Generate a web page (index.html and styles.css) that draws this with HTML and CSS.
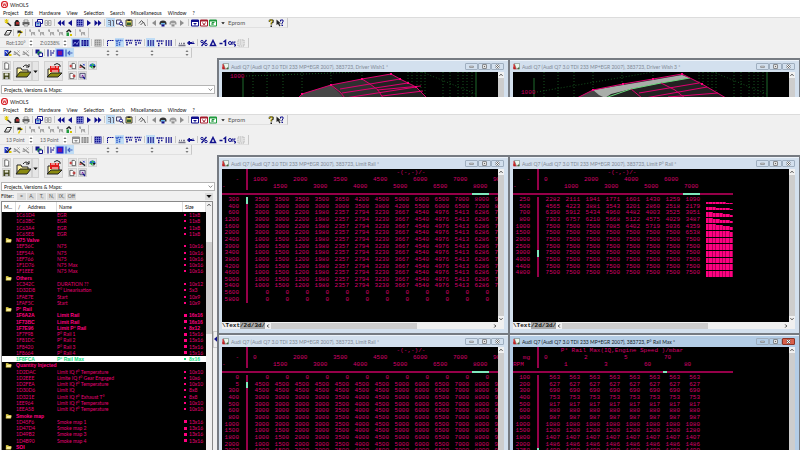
FILE: index.html
```
<!DOCTYPE html>
<html lang="en">
<head>
<meta charset="UTF-8">
<title>WinOLS</title>
<link rel="stylesheet" href="styles.css">
</head>
<body>
<div class="app app-back" id="back"></div>
<div class="app app-front" id="front"></div>
<script src="app.js"></script>
</body>
</html>
```
FILE: styles.css
```
/* Variables */

:root {
    --face: #f0f0f0;
    --line: #c8c8c8;
    --hot: #bfdcf5;
    --pink: #ff0080;
    --pink-dim: #960049;
    --mint: #7fe8bd;
    --ui: Lato, Roboto, sans-serif;
    --list: Lato, "Liberation Sans", sans-serif;
    --list-bold: "Liberation Sans", Arial, sans-serif;
    --mono: "Liberation Mono", "Courier New", monospace;
}

* {
    box-sizing: border-box;
    margin: 0;
    padding: 0;
}

body {
    display: flex;
    flex-direction: column;
    height: 100vh;
    overflow: hidden;
    background: var(--face);
    color: #111;
    font-family: var(--ui);
    font-size: 5px;
    line-height: 6px;
}

button, input, select {
    border: 0;
    background: none;
    color: inherit;
    font: inherit;
    appearance: none;
}

svg {
    display: block;
}

/* Application shell */

.app {
    display: flex;
    flex-direction: column;
    overflow: hidden;
    background: var(--face);
}

.app-back {
    flex: 0 0 97px;
}

.app-front {
    flex: 1;
    min-height: 0;
}

.app > * {
    flex: none;
}

.caption {
    display: flex;
    align-items: center;
    gap: 2px;
    height: 9px;
    padding-left: 1px;
    background: #fff;
}

.caption svg {
    width: 7px;
    height: 7px;
}

.menu {
    display: flex;
    gap: 6px;
    align-items: center;
    height: 9px;
    padding-left: 3px;
    background: #fff;
    border-bottom: 1px solid #dcdcdc;
}

.menu a {
    color: #111;
    text-decoration: none;
}

/* Toolbars */

.bar {
    display: flex;
    align-items: center;
    align-self: flex-start;
    gap: 3px;
    height: 10px;
    padding: 0 2px 0 3px;
    border-right: 1px solid var(--line);
    border-bottom: 1px solid #e0e0e0;
}

.group {
    display: flex;
    height: 9px;
    position: relative;
}

.group + .group::before {
    content: '';
    position: absolute;
    left: -2px;
    top: 1px;
    width: 1px;
    height: 7px;
    background: var(--line);
}

.g1 { width: 9px; }
.g2 { width: 19px; }
.g3 { width: 28px; }
.g4 { width: 38px; }
.g5 { width: 47px; }

.tool {
    display: flex;
    flex: 1;
    align-items: center;
    justify-content: center;
}

.tool svg {
    width: 8px;
    height: 8px;
}

.tool.on {
    background: var(--hot);
}

.tool.off {
    filter: grayscale(1);
    opacity: 0.45;
}

.device {
    display: flex;
    align-items: center;
    gap: 3px;
    width: 42px;
    color: #555;
    font-size: 6px;
}

.spin {
    display: flex;
    align-items: center;
    width: 31px;
}

.spin input {
    width: 26px;
    height: 8px;
    padding-left: 3px;
    color: #666;
    font-size: 5px;
}

.updown {
    width: 4px;
    height: 8px;
    background: #fff;
}

.updown svg {
    width: 4px;
    height: 8px;
}

.fields {
    display: flex;
    justify-content: space-between;
    width: 112px;
    padding-left: 29px;
}

.fields .updown {
    background: none;
}

.fields .updown + .updown {
    margin-left: 3px;
}

.fields .wide {
    margin-left: 26px;
}

/* Workspace */

.work {
    display: flex;
    overflow: hidden;
}

.app > .work {
    flex: 1;
    min-height: 0;
}

.side {
    display: flex;
    flex: none;
    flex-direction: column;
    width: 213px;
    padding-left: 1px;
}

.actions {
    display: flex;
    gap: 2px;
    height: 23px;
    padding: 3px 0 0 1px;
    flex: none;
}

.actions button {
    display: flex;
    align-items: center;
    justify-content: center;
    background: #e6e6e6;
    border: 1px solid #d2d2d2;
}

.stack {
    display: grid;
    grid-template-columns: repeat(var(--n), 9px);
    grid-auto-rows: 9px;
    gap: 1px;
}

.stack svg {
    width: 8px;
    height: 8px;
}

.open {
    display: flex;
    margin-right: 3px;
}

.actions .big {
    width: 19px;
}

.actions .drop {
    width: 7px;
}

.big svg {
    width: 16px;
    height: 16px;
}

.drop svg {
    width: 5px;
    height: 5px;
}

.actions .solo {
    margin-right: 3px;
}

.view {
    position: relative;
    flex: none;
    width: 214px;
    height: 9px;
    margin-top: 4px;
}

.view select {
    width: 100%;
    height: 9px;
    padding-left: 2px;
    background: #fff;
    border: 1px solid #b4b4b4;
    font-family: var(--list);
}

.view svg {
    position: absolute;
    right: 2px;
    top: 2px;
    width: 5px;
    height: 5px;
}

.filter {
    display: flex;
    flex: none;
    align-items: center;
    gap: 1px;
    height: 10px;
    font-family: var(--list);
}

.filter span {
    width: 15px;
}

.filter button {
    width: 9px;
    height: 7px;
    background: #dcdcdc;
    color: #555;
    line-height: 7px;
}

.filter button:last-of-type {
    width: 8px;
    margin-left: auto;
}

.filter svg {
    width: 6px;
    height: 6px;
    margin: 0 auto;
}

/* Map list */

.list {
    display: flex;
    flex: 1;
    min-height: 0;
    border: 1px solid #888;
    border-bottom: 0;
    background: #fff;
}

.maps {
    display: flex;
    flex: 1;
    flex-direction: column;
    font-family: var(--list);
    white-space: nowrap;
}

.maps tr {
    display: grid;
    grid-template-columns: 14px 41px 126px 1fr;
    align-items: center;
}

.maps th {
    height: 10px;
    padding-left: 2px;
    font-weight: normal;
    line-height: 10px;
    text-align: left;
    border-right: 1px solid #ddd;
}

.maps tbody {
    display: grid;
    flex: 1;
    grid-template-rows: repeat(38, 1fr);
    background: #000;
    color: #e80076;
}

.maps td {
    display: flex;
    align-items: center;
    height: 6px;
    line-height: 6px;
}

.maps .folder, .maps .strong {
    color: var(--pink);
    font-family: var(--list-bold);
    font-weight: bold;
}

.maps .picked {
    background: #fff;
    color: #12e283;
    font-family: var(--list-bold);
    font-weight: bold;
}

.maps svg {
    width: 7px;
    height: 6px;
    margin-left: 3px;
}

.dot {
    width: 2px;
    height: 2px;
    margin: 0 3px 0 1px;
    background: var(--pink);
}

.dot.fat {
    width: 3px;
    height: 3px;
    margin: 0 2px 0 1px;
}

.picked .dot {
    background: #12e283;
}

.vscroll {
    display: flex;
    flex: none;
    flex-direction: column;
    align-items: center;
    width: 6px;
    background: var(--face);
}

.vscroll svg {
    flex: none;
    width: 6px;
    height: 6px;
}

.vscroll i {
    width: 6px;
    flex: 1;
    background: #cdcdcd;
}

.list .vscroll i {
    flex: 0 0 92px;
    margin-top: 34px;
}

.splitter {
    display: flex;
    flex: none;
    align-items: center;
    width: 4px;
}

.splitter button {
    width: 4px;
    height: 17px;
    margin-top: 73px;
    border: 1px solid #ccc;
    border-right: 0;
}

.splitter svg {
    width: 3px;
    height: 6px;
}

/* Child windows */

.desk {
    display: grid;
    flex: 1;
    grid-template-columns: 1fr 1fr;
    grid-auto-rows: 176px;
    gap: 2px;
    min-width: 0;
    padding: 2px 1px 0 2px;
    background: #767b82;
    overflow: hidden;
}

.win {
    display: flex;
    flex-direction: column;
    min-width: 0;
    padding: 0 4px 4px 3px;
    background: #d3e0ee;
    border-top: 1px solid #edf3fa;
}

.win.active {
    background: #b4cde6;
}

.head {
    display: flex;
    flex: none;
    align-items: center;
    gap: 2px;
    height: 11px;
    color: #7f8995;
}

.active .head {
    color: #111a24;
}

.head svg {
    width: 7px;
    height: 7px;
}

.head h2 {
    flex: 1;
    overflow: hidden;
    font-size: 5px;
    font-weight: normal;
    white-space: nowrap;
}

.buttons {
    display: flex;
}

.buttons button {
    width: 13px;
    height: 7px;
    border: 1px solid #9fafc0;
    border-radius: 1px;
}

.buttons svg {
    width: 5px;
    height: 5px;
    margin: 0 auto;
}

.active .close {
    background: #d9604a;
    border-color: #8b3326;
}

.pane {
    display: flex;
    flex: 1;
    min-height: 0;
}

.canvas {
    flex: 1;
    min-width: 0;
    overflow: hidden;
    background: #000;
}

.canvas > svg {
    width: 100%;
    height: 153px;
}

.canvas text {
    fill: #c80066;
    font-family: var(--mono);
    font-size: 6px;
}

.tabs {
    display: flex;
    flex: none;
    align-items: center;
    height: 7px;
    padding-right: 6px;
    background: var(--face);
}

.tabs button {
    height: 7px;
    font: bold 6px/7px var(--mono);
}

.tabs button + button {
    background: #aaa;
}

.tabs svg {
    width: 6px;
    height: 6px;
}

.track {
    flex: 1;
}

.track i {
    display: block;
    width: 66%;
    height: 6px;
    background: #cdcdcd;
}

/* Value grids */

.grid {
    display: block;
    height: 100%;
    color: #d6006b;
    font-family: var(--mono);
    font-size: 6px;
    white-space: pre;
}

.grid tbody {
    display: grid;
    grid-template-rows: 8px repeat(22, 1fr);
    height: calc(100% + 1px);
}

.grid tr {
    display: grid;
    grid-template-columns: 17px 10px repeat(var(--cols), 20px) 33px;
    align-items: center;
}

.grid th, .grid td {
    font-weight: normal;
    line-height: 6px;
    text-align: right;
}

.grid .stem {
    align-self: stretch;
    width: 2px;
    margin-left: 7px;
    background: var(--pink-dim);
}

.grid .stem.mark {
    background: var(--mint);
}

.grid .name {
    grid-column: 3 / -2;
    padding-left: 4px;
    line-height: 8px;
    text-align: center;
}

.grid .key {
    padding-left: 4px;
    text-align: left;
}

.grid .unit {
    text-align: left;
}

.grid .rule {
    height: 2px;
    background: var(--pink-dim);
}

.grid .rule.mark {
    border-left: 3px solid var(--pink-dim);
    background: var(--mint);
}

.grid .rule.tick {
    border-right: 13px solid var(--pink-dim);
}

.grid .bars {
    display: flex;
    align-items: flex-end;
    align-self: stretch;
    padding: 1px 0 0 6px;
}

.bars i {
    flex: 1;
    background: var(--pink);
    border-right: 1px solid #b0005a;
}
```
FILE: app.js
```
// Icons, all on a 16 x 16 grid

const icons = {
    logo: '<circle cx="8" cy="8" r="7" fill="#fff" stroke="#d8232a" stroke-width="2.6"/><path d="M4 5l2 6 2-5 2 5 2-6" fill="none" stroke="#d8232a" stroke-width="2"/>',
    wand: '<path d="M5 6l9 8" stroke="#333" stroke-width="3"/><path d="M1 4h8M5 0v9M2 1l6 7M8 1L2 8" stroke="#e0c800" stroke-width="2"/>',
    bug: '<path d="M3 14V7l3-5h4l3 5v7z" fill="#222"/><path d="M6 6h6v5H6z" fill="#b03030"/>',
    printer: '<path d="M4 2h8v4H4z" fill="#fff" stroke="#444"/><path d="M1 6h14v6H1z" fill="#666"/><path d="M4 10h8v4H4z" fill="#eee" stroke="#444"/>',
    cards: '<path d="M5 1h10v8H5z" fill="#fff" stroke="#10108c" stroke-width="2"/><path d="M1 6h10v9H1z" fill="#dde" stroke="#10108c" stroke-width="2"/><path d="M3 9h6M3 12h6" stroke="#2878d0" stroke-width="2"/>',
    pair: '<path d="M2 3h5v10H2zM9 3h5v10H9z" fill="none" stroke="#555" stroke-width="2"/><path d="M3 8h10" stroke="#555" stroke-width="2"/>',
    first: '<path d="M8 2v12L1 8zM15 2v12L8 8z" fill="#10108c"/>',
    prev: '<path d="M12 2v12L4 8z" fill="#10108c"/>',
    next: '<path d="M4 2v12l8-6z" fill="#10108c"/>',
    last: '<path d="M1 2v12l7-6zM8 2v12l7-6z" fill="#10108c"/>',
    table: '<path d="M1 1h14v14H1z" fill="#10108c"/><path d="M2 5h12M2 9h12M2 13h12M5 2v12M9 2v12M13 2v12" stroke="#a8b4f0" stroke-width="1"/>',
    split: '<path d="M2 3h5v11M10 3h3v11" fill="none" stroke="#667" stroke-width="2"/><path d="M3 7h2M3 11h2" stroke="#667" stroke-width="2"/>',
    find: '<path d="M1 2h9v8H1z" fill="#eef" stroke="#446" stroke-width="2"/><circle cx="10" cy="9" r="3" fill="#fff" stroke="#10108c" stroke-width="2"/><path d="M12 11l3 4" stroke="#222" stroke-width="2"/>',
    clip: '<path d="M2 2h12v12H2z" fill="#e9dc66" stroke="#444" stroke-width="2"/><path d="M4 7h8v5H4z" fill="#315f32"/><path d="M5 1h6v3H5z" fill="#222"/>',
    link: '<path d="M2 9l5-6 4 4M5 12l6-6 4 8" fill="none" stroke="#555" stroke-width="2"/>',
    car: '<path d="M1 9a7 6 0 0 1 14 0v2H1z" fill="#333"/><path d="M4 8h8v3H4z" fill="#6db7e8"/><path d="M5 11h6v4H5z" fill="#10108c"/>',
    winBlue: '<path d="M1 2h14v12H1z" fill="#fff" stroke="#10108c" stroke-width="2"/><path d="M1 2h14v4H1z" fill="#10108c"/><path d="M5 9h6M8 8v5" stroke="#10108c" stroke-width="2"/>',
    winRed: '<path d="M1 2h14v12H1z" fill="#fff" stroke="#a51d2d" stroke-width="2"/><path d="M1 2h14v3H1z" fill="#a51d2d"/><path d="M5 7l3 5 3-5" fill="none" stroke="#a51d2d" stroke-width="2"/>',
    winGreen: '<path d="M1 2h14v12H1z" fill="#fff" stroke="#1f9a3d" stroke-width="2"/><path d="M1 2h14v3H1z" fill="#1f9a3d"/><path d="M6 12V7h5M6 10h4" fill="none" stroke="#1f9a3d" stroke-width="2"/>',
    help: '<path d="M5 6V3l2-1h3l2 1v3L9 8v3" fill="none" stroke="#333" stroke-width="3"/><path d="M5 5V3l2-1h3v4L8 8v3" fill="none" stroke="#e0c800" stroke-width="1.6"/><path d="M7 13h3v3H7z" fill="#222"/>',
    whatsThis: '<path d="M1 1v11l3-2 3 5 2-2-3-4h4z" fill="#222"/><path d="M9 5V2h5v4l-2 2v3M11 13h3" fill="none" stroke="#10108c" stroke-width="2"/>',
    eraser: '<path d="M6 3h9l-5 9H1z" fill="#fff" stroke="#222" stroke-width="2"/><path d="M4 8h8" stroke="#555"/>',
    key: '<path d="M3 3h6l4 3-3 3-4-2-3 2z" fill="#222"/><path d="M8 9l-3 6" stroke="#e0c800" stroke-width="3"/><path d="M9 4l5 3" stroke="#e0c800" stroke-width="2"/>',
    node: '<path d="M3 3l4 4 5 1 2 5M7 7v6" fill="none" stroke="#444" stroke-width="2"/><path d="M2 1h4v4H2zM9 6h5v5H9z" fill="#555"/>',
    nodeGo: '<path d="M3 6l5-4 4 4" fill="none" stroke="#222" stroke-width="3"/><path d="M3 7h5v7H3z" fill="#1f9a3d"/><path d="M10 10h4v4h-4z" fill="#d6c300"/>',
    wave: '<path d="M1 1h14v14H1z" fill="#10108c"/><path d="M3 11l3-5 4 5 3-6" fill="none" stroke="#b8c8ff" stroke-width="1.4"/>',
    columns: '<path d="M1 2h4v12H1zM6 2h4v12H6zM11 2h4v12h-4z" fill="#10108c"/><path d="M1 6h14M1 10h14" stroke="#99a8ee"/>',
    axisL: '<path d="M3 14V3h12" fill="none" stroke="#10108c" stroke-width="2" stroke-dasharray="3 1"/>',
    axisM: '<path d="M4 14V3h11M9 6v8M1 3h2" fill="none" stroke="#3358c8" stroke-width="3" stroke-dasharray="3 1"/>',
    axisT: '<path d="M1 3h14M4 6v8M8 8h6" fill="none" stroke="#10108c" stroke-width="3" stroke-dasharray="3 1"/>',
    digits: '<path d="M1 4h14M1 8h14M1 12h14" stroke="#10108c" stroke-width="3" stroke-dasharray="3 2"/>',
    digitsHi: '<path d="M1 4h14M4 9h3M10 9h3M4 13h3" stroke="#10108c" stroke-width="3" stroke-dasharray="3 1"/>',
    ruler: '<path d="M1 13h14M2 9h2M6 9h2M10 9h4" stroke="#778" stroke-width="3"/>',
    swap: '<path d="M1 8l4-4v8zM6 7h4M6 9h9M12 5v5" fill="#10108c" stroke="#10108c" stroke-width="2"/>',
    percent: '<path d="M13 2L3 14" stroke="#10108c" stroke-width="2.6"/><circle cx="4" cy="5" r="2.4" fill="none" stroke="#10108c" stroke-width="2"/><circle cx="12" cy="11" r="2.4" fill="none" stroke="#10108c" stroke-width="2"/>',
    delta: '<path d="M8 3l5 10H3z" fill="none" stroke="#10108c" stroke-width="3"/>',
    minusOne: '<path d="M1 9h6M9 6l4-3v11" fill="none" stroke="#10108c" stroke-width="3"/>',
    org: '<circle cx="4" cy="8" r="3" fill="none" stroke="#10108c" stroke-width="2"/><path d="M8 12V6h3M15 6h-3v5h3v3h-3" fill="none" stroke="#10108c" stroke-width="2"/>',
    frame: '<path d="M2 2h12v12H2zM5 6h6M5 10h6" fill="none" stroke="#666" stroke-width="2" stroke-dasharray="3 1"/>',
    magic: '<path d="M1 2h8v12H1z" fill="#2038c8"/><path d="M5 13l9-9" stroke="#222" stroke-width="3"/><path d="M10 10h5v4h-5z" fill="#e0c800"/><path d="M3 4l4 5" stroke="#fff" stroke-width="2"/>',
    stackWin: '<path d="M1 1h8v8H1z" fill="#10108c"/><path d="M5 5h8v7H5z" fill="#1f9a3d"/><path d="M8 8h7v7H8z" fill="#fff" stroke="#10108c" stroke-width="2"/>',
    levels: '<path d="M2 1v14M6 4h3M6 8h8M6 12h4M12 4h3" stroke="#10108c" stroke-width="2.4"/>',
    fill: '<path d="M1 1h14v14H1z" fill="#2020d0"/><path d="M4 4h8v8H4z" fill="#7b158f"/>',
    arrowIn: '<path d="M2 1v14M15 8H6M10 4L6 8l4 4" fill="none" stroke="#4060c0" stroke-width="2.4"/>',
    page: '<path d="M4 1h6l3 3v11H4z" fill="#fff" stroke="#333" stroke-width="1.6"/>',
    save: '<path d="M1 1h14v14H1z" fill="#3e4216"/><path d="M4 2h8v5H4z" fill="#e8e8d8"/><path d="M5 10h7v5H5z" fill="#bbb"/>',
    folder: '<path d="M2 14V5h4l1 2h6v3" fill="#fff4a0" stroke="#222"/><path d="M1 14l4-5h11l-4 5z" fill="#8a8a10" stroke="#222"/><path d="M8 4q3-4 6 0M14 1v3h-3" fill="none" stroke="#222"/>',
    rom: '<path d="M2 14V6h11v4" fill="#fff4a0" stroke="#222"/><path d="M1 14l4-4h11l-4 4z" fill="#8a8a10" stroke="#222"/><path d="M4 3h9v6H4z" fill="#e01818"/><path d="M6 3v2M8 3v2M11 3v2M6 8h6" stroke="#fff"/><path d="M8 2q3-3 6 0v2" fill="none" stroke="#222"/>',
    pageArrow: '<path d="M7 2h5l3 3v9H7z" fill="#fff" stroke="#333" stroke-width="1.6"/><path d="M1 8h6M4 5v6" stroke="#c81e1e" stroke-width="2"/>',
    pageOut: '<path d="M2 2h6l3 3v9H2z" fill="#fff" stroke="#333" stroke-width="1.6"/><path d="M8 8h7M12 5v6" stroke="#c81e1e" stroke-width="2"/>',
    cutWand: '<path d="M2 5l12 9" stroke="#222" stroke-width="3"/><path d="M9 3l4 4M13 3L9 7" stroke="#2038c8" stroke-width="2"/><path d="M1 9h5v3H1z" fill="#c81e1e"/>',
    globe: '<path d="M1 9a7 7 0 0 1 14 0z" fill="#2060d0"/><path d="M1 8h7v7z" fill="#1fae3d"/><path d="M9 8h6l-4 7z" fill="#111"/><path d="M5 4l3-2 4 3-3 3z" fill="#35c050"/>',
    picture: '<path d="M2 2h12v10H2z" fill="#dde" stroke="#446" stroke-width="2"/><path d="M5 9l3-4 4 4z" fill="#7b158f"/><path d="M9 10l5 5" stroke="#10108c" stroke-width="3"/>',
    dir: '<path d="M1 3h6l2 2h6v9H1z" fill="#f2e050"/><path d="M3 7h13l-2 7H1z" fill="#fff7a8" stroke="#a08a10"/>',
    map: '<path d="M1 2h13v12H1z" fill="#d83030"/><path d="M3 1h12v8L8 14z" fill="#eaf6ea" stroke="#466"/><path d="M1 8l6 6H1z" fill="#b02020"/><path d="M10 14l5-5v5z" fill="#1f7a3d"/>',
    caret: '<path d="M1 5h14l-7 8z" fill="#111"/>',
    chevron: '<path d="M2 5l6 6 6-6" fill="none" stroke="#444" stroke-width="2"/>',
    up: '<path d="M4 10l4-4 4 4" fill="none" stroke="#333" stroke-width="2.6"/>',
    down: '<path d="M4 6l4 4 4-4" fill="none" stroke="#333" stroke-width="2.6"/>',
    left: '<path d="M10 4L6 8l4 4" fill="none" stroke="#333" stroke-width="2.6"/>',
    right: '<path d="M6 4l4 4-4 4" fill="none" stroke="#333" stroke-width="2.6"/>',
    minimize: '<path d="M2 7h12v4H2z" fill="#fff" stroke="#666" stroke-width="2"/>',
    restore: '<path d="M2 2h12v12H2z" fill="#fff" stroke="#666" stroke-width="2.6"/><path d="M6 6h4v4H6z" fill="#666"/>',
    close: '<path d="M3 3l10 10M13 3L3 13" stroke="#666" stroke-width="6"/><path d="M3 3l10 10M13 3L3 13" stroke="#fff" stroke-width="3"/>'
};

const icon = name => `<svg viewBox="0 0 16 16" aria-hidden="true">${icons[name]}</svg>`;

const updown = '<span class="updown"><svg viewBox="0 0 8 16"><path d="M1 6l3-4 3 4zM1 10l3 4 3-4z" fill="#777"/></svg></span>';

// "*" marks a pressed button, "-" a disabled one

function group(names) {
    const list = names.split(' ');
    const tools = list.map(item => {
        const name = item.replace(/^[*-]/, '');
        const state = item[0] === '*' ? ' on' : item[0] === '-' ? ' off' : '';
        return `<button class="tool${state}" aria-label="${name}">${icon(name)}</button>`;
    });
    return `<div class="group g${list.length}">${tools.join('')}</div>`;
}

const groups = (...all) => all.map(group).join('');

const spin = (label, value) =>
    `<span class="spin"><input aria-label="${label}" value="${value}">${updown}</span>`;

function toolbars(app) {
    return `
<div class="bar">
${groups('wand bug printer', 'cards -pair', 'first prev table next last', '*split find clip', 'link', '-prev car -car -next', 'winBlue winRed winGreen')}
<span class="device"><svg width="4" height="4" viewBox="0 0 16 16">${icons.caret}</svg>Eprom</span>
${groups('help whatsThis')}
</div>
<div class="bar">${groups('eraser', 'key', '-node -node -node -node nodeGo', '-node')}</div>
<div class="bar">
${spin('Rotation', app.spins[0])}${spin('Zoom', app.spins[1])}
${groups(...app.modes, 'axisL *axisM axisT axisT', '*digits digitsHi digits', 'ruler swap', 'percent delta minusOne org -frame')}
</div>
<div class="bar">
${groups('magic -cutWand -cutWand', 'stackWin', 'levels *fill *arrowIn')}
<span class="fields">${updown}${updown}<span class="wide"></span>${updown}<span class="wide"></span>${updown}</span>
</div>`;
}

// Map list: [folder, [address, name, size, kind]]

const maps = [
    ['', [['1C61D4', 'EGR', '11x8'], ['1C62BC', 'EGR', '11x8'], ['1C63A4', 'EGR', '11x8'], ['1C65E8', 'EGR', '11x8']]],
    ['N75 Valve', [['1EF36C', 'N75', '10x16'], ['1EF54A', 'N75', '10x16'], ['1EF766', 'N75', '10x16'], ['1F1D76', 'N75 Max', '10x16'], ['1F1EEE', 'N75 Max', '10x16']]],
    ['Others', [['1C342C', 'DURATION ??', '10x12'], ['1D32D8', 'T° Linearisation', '5x3'], ['1FAE7E', 'Start', '10x9'], ['1FAF5C', 'Start', '10x9']]],
    ['P° Rail', [['1F6A2A', 'Limit Rail', '16x16', 'strong'], ['1F73BC', 'Limit Rail', '16x16', 'strong'], ['1F7E96', 'Limit P° Rail', '8x12', 'strong'], ['1F7F98', 'P° Rail 1', '15x16'], ['1F81DC', 'P° Rail 2', '15x16'], ['1F8420', 'P° Rail 3', '15x16'], ['1F8664', 'P° Rail 4', '15x16'], ['1F8FCA', 'P° Rail Max', '8x16', 'picked']]],
    ['Quantity Injected', [['1D2DAC', 'Limit IQ f° Temperature', '10x10'], ['1D2EEE', 'Limite IQ f° Gear Engaged', '10x6'], ['1D2FEA', 'Limit IQ f° Temperature', '10x10'], ['1D30D6', 'Limit IQ', '8x8'], ['1D321E', 'Limit IQ f°  Exhaust T°', '8x8'], ['1EE964', 'Limit IQ f° Temperature', '10x10'], ['1EEA58', 'Limit IQ f° Temperature', '10x10']]],
    ['Smoke map', [['1D45F6', 'Smoke map 1', '13x16'], ['1D47D4', 'Smoke map 2', '13x16'], ['1D49B2', 'Smoke map 3', '13x16'], ['1D4B90', 'Smoke map 4', '13x16']]],
    ['SOI', []]
];

function mapList() {
    const rows = maps.map(([folder, items]) =>
        (folder ? `<tr class="folder"><td>${icon('dir')}</td><td>${folder}</td><td></td><td></td></tr>` : '') +
        items.map(([address, name, size, kind = '']) => {
            const fat = parseInt(size) > 12 ? ' fat' : '';
            return `<tr class="${kind}"><td></td><td>${address}</td><td>${name}</td><td><i class="dot${fat}"></i>${size}</td></tr>`;
        }).join('')).join('');
    return `
<div class="filter"><span>Filter:</span>
<button>=</button><button>A,</button><button>T,</button><button>N,</button><button>IX,</button><button>Off</button>
<button aria-label="More">${icon('caret')}</button></div>
<div class="list">
<table class="maps">
<thead><tr><th>M...</th><th>/ &nbsp; &nbsp; &nbsp;Address</th><th>Name</th><th>Size</th></tr></thead>
<tbody>${rows}</tbody>
</table>
<div class="vscroll">${icon('up')}<i></i></div>
</div>`;
}

function sidebar(id, list) {
    const small = names => names.map(n => `<button aria-label="${n}">${icon(n)}</button>`).join('');
    return `
<div class="side">
<div class="actions">
<div class="stack" style="--n: 1">${small(['page', 'save'])}</div>
<div class="open"><button class="big" aria-label="Open project">${icon('folder')}</button><button class="drop" aria-label="Recent">${icon('caret')}</button></div>
<button class="big solo" aria-label="Import">${icon('rom')}</button>
<div class="stack" style="--n: 3">${small(['pageArrow', 'cutWand', 'globe', 'pageOut', 'picture'])}</div>
</div>
<div class="view"><select id="view-${id}" aria-label="View"><option>Projects, Versions &amp; Maps:</option></select>${icon('chevron')}</div>
${list}
</div>
<div class="splitter"><button aria-label="Collapse"><svg viewBox="0 0 8 16"><path d="M8 1v14L0 8z" fill="#10108c"/></svg></button></div>`;
}

// Value grids

const times = (value, n) => Array(n).fill(value);
const low = [1980, 2357, 2794, 3230, 3667, 4540, 4976, 5413, 6286, 7200];
const high = [5000, 6000, 6500, 7000, 8000, 9000];
const mid = [3000, 3500, 4000, 4500, ...high];

const limitRail = {
    name: '-(-,-)/-', units: ['-', '-'], cols: 16, mark: [11, 0],
    keys: [1000, 1500, 2000, 3000, 3500, 4000, 4500, 5000, 6000, 6500, 7000, 8000, 9000],
    rows: [
        [300, 3500, 3500, 3500, 3500, 3650, 4200, 4500, ...high],
        [400, 3000, 3000, 3000, 3000, 3000, 3500, 3800, 4200, 5500, 6000, 6500, 7200, 8000],
        ...[600, 1200, 1600, 2000].map(k => [k, 3000, 3000, 2200, ...low]),
        ...[2400, 3000, 3400, 3800, 4200, 4600, 5000, 5400].map(k => [k, 1000, 1500, 1200, ...low]),
        [5600, ...times(0, 12)],
        [5800, ...times(0, 12)]
    ]
};

const limitPressure = {
    name: '-(-,-)/-', units: ['-', '-'], cols: 8, mark: [7, 8], bars: 7500,
    keys: [0, 1000, 2000, 3000, 4000, 5000, 6000, 7000],
    rows: [
        [250, 2282, 2111, 1941, 1771, 1601, 1430, 1259, 1090],
        [500, 4565, 4223, 3881, 3543, 3201, 2860, 2518, 2179],
        [700, 6390, 5912, 5434, 4960, 4482, 4003, 3525, 3051],
        [800, 7303, 6757, 6210, 5668, 5122, 4575, 4029, 3487],
        [1000, 7500, 7500, 7500, 7085, 6402, 5719, 5036, 4359],
        [1500, ...times(7500, 7), 6538],
        ...[2000, 2500, 3000, 4000, 4400, 4800].map(k => [k, ...times(7500, 8)])
    ]
};

const limitRail2 = {
    name: '-(-,-)/-', units: ['-', '-'], cols: 16, mark: [11, 1],
    keys: [0, 1500, 2000, 3000, 3500, 4000, 4500, 5000, 6000, 6500, 7000, 8000, 9000],
    rows: [
        [0, ...times(0, 12)],
        ...[5, 300].map(k => [k, ...times(4500, 7), ...high]),
        ...[400, 500, 600, 800, 1000].map(k => [k, 3000, 3000, 3000, ...mid]),
        ...[1500, 1800, 2000, 3000].map(k => [k, 1000, 1500, 2000, ...mid])
    ]
};

const railMax = {
    name: 'P° Rail Max(IQ,Engine Speed )/mbar', units: ['mg', 'RPM'], cols: 8, mark: [6, 11], tick: true,
    keys: [0, 1, 2, 3, 5, 60, 70, 80],
    rows: [[100, 563], [200, 627], [300, 690], [400, 753], [500, 817], [600, 880], [800, 987], [1000, 1080],
        [1500, 1280], [1800, 1407], [2000, 1486], [2250, 1499]]
        .map(([k, v]) => [k, ...times(v, 8)])
};

function valueGrid(map) {
    const stem = '<td class="stem"></td>';
    const keys = odd => map.keys.map((k, i) => `<th class="key">${i % 2 === odd ? k : ''}</th>`).join('');
    const rule = Array.from({ length: map.cols }, (_, i) =>
        `<td class="rule${i === map.mark[0] ? ' mark' + (map.tick ? ' tick' : '') : ''}"></td>`).join('');
    const bars = values => values.map(v => `<i style="height: ${Math.round(v / map.bars * 100)}%"></i>`).join('');
    const rows = map.rows.map(([key, ...values], i) => `
<tr><th>${key}</th><td class="stem${i === map.mark[1] ? ' mark' : ''}"></td>
${values.map(v => `<td>${v}</td>`).join('')}${map.bars ? `<td class="bars">${bars(values)}</td>` : ''}</tr>`);
    return `
<table class="grid" style="--cols: ${map.cols}"><tbody>
<tr><th></th>${stem}<th class="name">${map.name}</th></tr>
<tr><th>${map.units[0]}</th>${stem}${keys(0)}</tr>
<tr><th class="unit">${map.units[1]}</th>${stem}${keys(1)}</tr>
<tr><td class="rule"></td><td class="rule"></td>${rule}<td class="rule"></td></tr>
${rows.join('')}
</tbody></table>`;
}

// 3d views

const dots = xs => xs.map(x => `M${x} 0V153`).join('');

const scene = (body, label) => `
<svg viewBox="0 0 276 153" preserveAspectRatio="none">
<path d="${dots([31, 45, 61, 80, 109, 140, 186, 190, 195, 199, 203, 221, 228, 236, 241, 245, 250])}" stroke="#14521e" stroke-dasharray="1 2"/>
<path d="M21 6V153M254 0V153" stroke="#1f6a2c"/>
<path d="M24 ${label - 2}L140 0M200 0L254 22" stroke="#14521e" stroke-dasharray="1 2" fill="none"/>
${body}
<text x="8" y="${label}">1000</text>
</svg>`;

const wish1 = scene(`
<path d="M76 26L80 22 109 13 140 7 169 2 178 7 186 11 194 15 205 26z" fill="#222"/>
<path d="M76 26L80 22 109 13 118 20 122 26z" fill="#474747"/>
<path d="M109 13L140 7 152 15 161 26H122z" fill="#303030"/>
<path d="M76 26L80 22 109 13 140 7 169 2 178 7 186 11 194 15 205 26M109 13l9 7 5 6M140 7l8 5 8 6 5 8M118 17l60-10M120 21l66-10M123 26l71-11M155 18l44-4M160 24l41-5" fill="none" stroke="#e00070"/>
<path d="M79 21h2v2h-2zM108 12h2v2h-2zM139 6h2v2h-2zM168 1h2v2h-2zM177 6h2v2h-2zM185 10h2v2h-2zM193 14h2v2h-2z" fill="#ff0080"/>`, 6);

const wish3 = scene(`
<path d="M64 26L80 18 110 12 140 7 169 2 177 6 189 12 213 26z" fill="#222"/>
<path d="M64 26L80 18 92 26z" fill="#474747"/>
<path d="M80 18L110 13 140 8 169 3 177 6 148 11 118 17 98 22 92 26 86 23z" fill="#a9ada9"/>
<path d="M92 26l26-9 30-6 29-5" fill="none" stroke="#69d77a"/>
<path d="M64 26L80 18 110 12 140 7 169 2 177 6 189 12 213 26M118 17l11 9M148 11l14 7 10 8M126 21l60-10M132 26l62-11M155 25l50-4" fill="none" stroke="#e00070"/>
<path d="M79 17h2v2h-2zM109 11h2v2h-2zM139 6h2v2h-2zM168 1h2v2h-2zM188 11h2v2h-2z" fill="#ff0080"/>`, 22);

function win(title, content, active = false) {
    return `
<section class="win${active ? ' active' : ''}">
<div class="head">${icon('map')}<h2>Audi Q7 (Audi Q7 3.0 TDI 233 MP+EGR 2007), 383723, ${title} *</h2>
<div class="buttons"><button aria-label="Minimize">${icon('minimize')}</button><button aria-label="Restore">${icon('restore')}</button><button class="close" aria-label="Close">${icon('close')}</button></div></div>
<div class="pane"><div class="canvas">${content}</div><div class="vscroll">${icon('up')}<i></i>${icon('down')}</div></div>
<div class="tabs"><button>\\Text</button><button>/2d/</button><button>3d/</button>${icon('left')}<span class="track"><i></i></span>${icon('right')}</div>
</section>`;
}

function render(id, app) {
    const menu = ['Project', 'Edit', 'Hardware', 'View', 'Selection', 'Search', 'Miscellaneous', 'Window', '?'];
    document.getElementById(id).innerHTML = `
<div class="caption">${icon('logo')}WinOLS</div>
<nav class="menu">${menu.map(m => `<a href="#">${m}</a>`).join('')}</nav>
${toolbars(app)}
<div class="work">${sidebar(id, app.list)}<main class="desk">${app.windows.join('')}</main></div>`;
}

render('back', {
    spins: ['Rot:120°', 'Z:0238%'],
    modes: ['*wave *columns', '-table'],
    list: '',
    windows: [win('Driver Wish1', wish1), win('Driver Wish 3', wish3)]
});

render('front', {
    spins: ['13 Point', '13 Point'],
    modes: ['-winBlue -columns', 'table'],
    list: mapList(),
    windows: [
        win('Limit Rail', valueGrid(limitRail)),
        win('Limit P° Rail', valueGrid(limitPressure)),
        win('Limit Rail', valueGrid(limitRail2)),
        win('P° Rail Max', valueGrid(railMax), true)
    ]
});
```
